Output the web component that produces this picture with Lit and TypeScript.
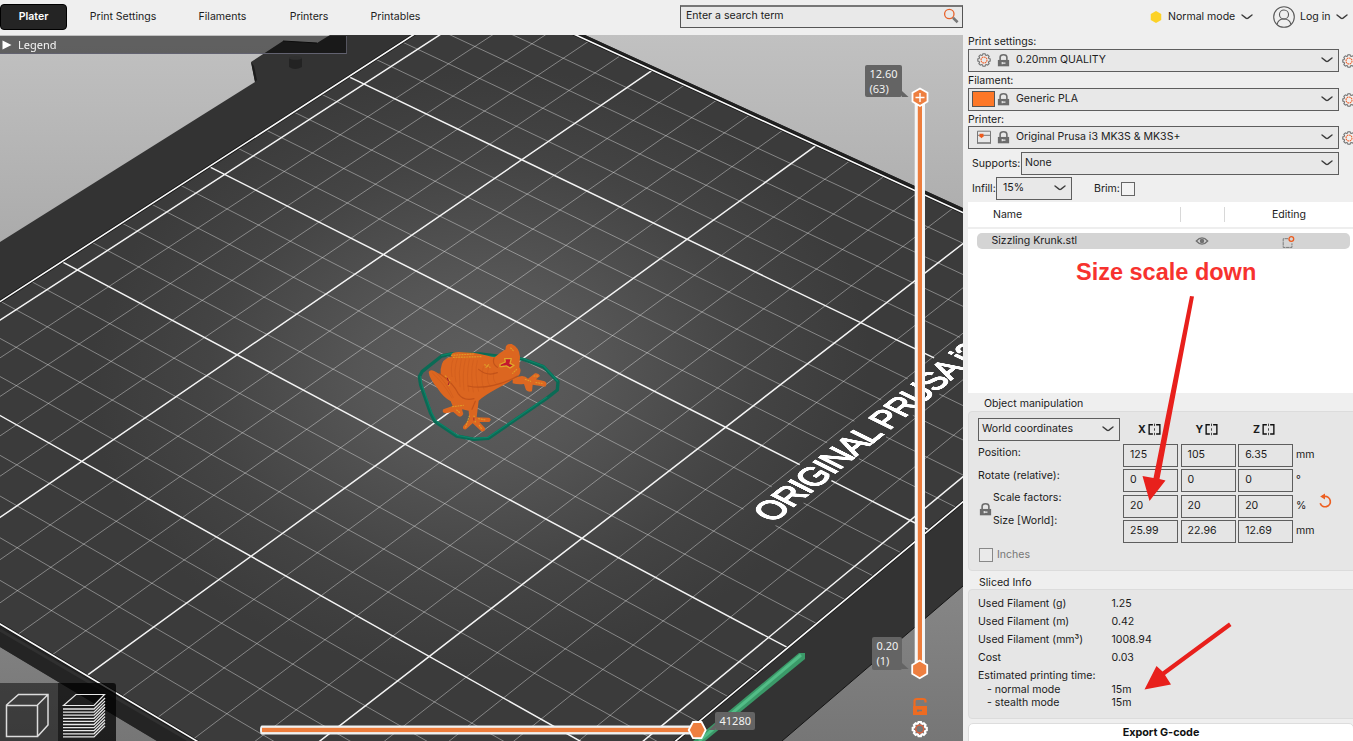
import { LitElement, html, svg, css } from "lit";
import { customElement, property } from "lit/decorators.js";

/* Perspective of the print bed: bed millimetres -> canvas pixels. */
const H = {
  a: 332.08, b: -498.55, c: 582,
  d: -195.59, e: -246.82, f: 538.3,
  g: 0.06202, h: 0.07954,
};

function project(x: number, y: number): [number, number] {
  const u = (x - 100) / 100;
  const v = (y - 55) / 150;
  const w = 1 + H.g * u + H.h * v;
  return [(H.a * u + H.b * v + H.c) / w, (H.d * u + H.e * v + H.f) / w];
}

const seg = (x1: number, y1: number, x2: number, y2: number) => {
  const [ax, ay] = project(x1, y1);
  const [bx, by] = project(x2, y2);
  return `M${ax.toFixed(1)} ${ay.toFixed(1)}L${bx.toFixed(1)} ${by.toFixed(1)}`;
};

/* matrix3d that lays an HTML box flat on the bed at (x0, y0). */
function bedMatrix(x0: number, y0: number, k: number, top: number): string {
  const u0 = (x0 - 100) / 100, us = k / 100;
  const v0 = (y0 - 55) / 150, vt = -k / 150;
  const w = [H.g * us, H.h * vt, 1 + H.g * u0 + H.h * v0];
  const px = [H.a * us, H.b * vt, H.a * u0 + H.b * v0 + H.c];
  const py = [H.d * us, H.e * vt, H.d * u0 + H.e * v0 + H.f].map((n, i) => n - top * w[i]);
  const n = (v: number) => (v / w[2]).toFixed(9);
  return `matrix3d(${n(px[0])},${n(py[0])},0,${n(w[0])},${n(px[1])},${n(py[1])},0,${n(w[1])},0,0,1,0,${n(px[2])},${n(py[2])},0,1)`;
}

function gridPaths() {
  let thin = "", bold = "";
  for (let x = 10; x < 250; x += 10) {
    const cut = x >= 130;
    const s = cut ? seg(x, 0, x, 26) + seg(x, 34.6, x, 210) : seg(x, 0, x, 210);
    if (x % 50 === 0) bold += s; else thin += s;
  }
  for (let y = 5; y < 210; y += 10) {
    const s = seg(0, y, 250, y);
    if ((y - 5) % 50 === 0) bold += s; else thin += s;
  }
  const edge = seg(0, 0, 250, 0) + seg(250, 0, 250, 210) + seg(250, 210, 0, 210) + seg(0, 210, 0, 0);
  return { thin, bold, edge };
}

const gearPath = (() => {
  const n = 8;
  let d = "";
  for (let i = 0; i < n; i++) {
    const t = (i / n) * Math.PI * 2;
    const p = (r: number, o: number) => `${(8 + r * Math.cos(t + o)).toFixed(2)} ${(8 + r * Math.sin(t + o)).toFixed(2)}`;
    d += `${i ? "L" : "M"}${p(5.1, -0.3)}L${p(6.3, -0.17)}L${p(6.3, 0.17)}L${p(5.1, 0.3)}`;
  }
  return d + "Z";
})();

const icons: Record<string, unknown> = {
  gear: svg`<path d=${gearPath} fill="none" stroke="#727272" stroke-width="1.1"/><circle cx="8" cy="8" r="3" fill="none" stroke="#f0602a" stroke-width="1.1" stroke-dasharray="1.7 .6"/>`,
  lock: svg`<path d="M4.4 8V4.6Q4.4 1.8 8 1.8T11.6 4.6V8" fill="none" stroke="#6c6c6c" stroke-width="1.7"/><path d="M2 7.4h12v6.8H2z" fill="#6c6c6c"/><path d="M6.3 10.8h3.8M6.6 9.6v2.4" stroke="#e8e8e8" stroke-width="1.1"/>`,
  printer: svg`<path d="M1.5 14.3V2.200h13v12.100" fill="none" stroke="#777" stroke-width="1"/><path d="M1.500 6.300h13" stroke="#777"/><path d="M1 14h14" stroke="#777" stroke-width="1.600"/><path d="M3.500 4.800h4v2.400l-2 2-2-2z" fill="#ed5a1c"/>`,
  chev: svg`<path d="M3 6L7 9.100Q8 9.800 9 9.100L13 6" fill="none" stroke="#3c3c3c" stroke-width="1.400" stroke-linecap="round"/>`,
  eye: svg`<path d="M1.5 8Q8 .8 14.500 8Q8 15.200 1.500 8Z" fill="none" stroke="#707070" stroke-width="1.500"/><circle cx="8" cy="8" r="2.600" fill="#707070"/>`,
  edit: svg`<path d="M8 4.200H2.500v10h10V9.500" fill="none" stroke="#777" stroke-width="1.100" stroke-dasharray="4 .7"/><circle cx="11.800" cy="4.600" r="2.700" fill="none" stroke="#ed5a1c" stroke-width="1.500"/>`,
  mirror: svg`<path d="M6 2.200H1.400V13.600H6M10 2.200h4.600V13.600H10" fill="none" stroke="#111" stroke-width="1.700"/><path d="M8 .8v3M8 6.500v3M8 12v3" stroke="#333" stroke-width="1.100"/>`,
  undo: svg`<path d="M3.200 10.200A5.200 5.200 0 1 0 7.500 3.400H5" fill="none" stroke="#ed5f21" stroke-width="1.700"/><path d="M8 .4L3.200 3.600L8 6.600Z" fill="#ed5f21"/>`,
  user: svg`<g fill="none" stroke="#585858" stroke-width=".8"><circle cx="8" cy="8" r="7.500"/><circle cx="8" cy="6.200" r="3.300"/><path d="M3 13.400Q3.800 9.400 8 9.500T13 13.400"/></g>`,
  search: svg`<circle cx="6.300" cy="6" r="4.700" fill="none" stroke="#e8622a" stroke-width="1.300"/><path d="M10 9.800L14.600 14.300" stroke="#777" stroke-width="2.600"/>`,
  hexagon: svg`<path d="M8 1.200L14 4.600V11.400L8 14.800L2 11.400V4.600Z" fill="#fcd227"/>`,
};

@customElement("ps-icon")
class PsIcon extends LitElement {
  @property() name = "gear";
  static styles = css`
    :host { display: block; width: 16px; height: 16px; flex: none; }
    svg { display: block; width: 100%; height: 100%; overflow: visible; }
  `;
  render() {
    return html`<svg viewBox="0 0 16 16">${icons[this.name]}</svg>`;
  }
}

@customElement("ps-combo")
class PsCombo extends LitElement {
  @property() value = "";
  static styles = css`
    :host {
      display: flex; align-items: center; box-sizing: border-box; height: 23px;
      border: 1px solid #5e5e5e; background: #e8e8e8; padding: 0 3px 1px; color: #1c1c1c;
    }
    .value { flex: 1; white-space: nowrap; }
    .chev { width: 16px; height: 16px; }
  `;
  render() {
    return html`<slot></slot><span class="value">${this.value}</span><ps-icon class="chev" name="chev"></ps-icon>`;
  }
}

@customElement("bed-view")
class BedView extends LitElement {
  static styles = css`
    :host { display: block; position: relative; width: 963px; height: 706px; overflow: hidden;
      background: linear-gradient(#c1c1c1, #767676); }
    svg { display: block; width: 963px; height: 706px; }
    .brand { position: absolute; left: 0; top: 0; transform-origin: 0 0; white-space: nowrap;
      font: 400 88px/88px "Liberation Sans", Arial, sans-serif; letter-spacing: -2.500px; color: #fff;
      -webkit-text-stroke: 4px #fff; }
    .over { position: absolute; left: 0; top: 0; }
    .legend { position: absolute; left: 0; top: 1px; width: 347px; height: 18px; box-sizing: border-box;
      background: rgba(0,0,0,.5); border-bottom: 1px solid #626270; border-right: 1px solid #55555f;
      display: flex; align-items: center; gap: 6px; color: #f4f4f4;
      font: 11px "Noto Sans", sans-serif; padding-left: 2px; }
    .legend svg { width: 10px; height: 10px; }
    .tip { position: absolute; box-sizing: border-box; background: #646464; border-radius: 2px; color: #f2f2f2;
      font: 11px/14.500px "Noto Sans", sans-serif; padding: 2px 4.500px; white-space: nowrap; }
    .tip-top { left: 865px; top: 30px; width: 37px; height: 32px; }
    .tip-bottom { left: 872px; top: 602px; width: 30px; height: 33px; }
    .tip-move { left: 715px; top: 677px; width: 40px; height: 18px; }
    .views { position: absolute; left: 0; top: 648px; width: 116px; height: 58px; display: flex;
      border-radius: 0 3px 0 0; overflow: hidden; }
    .view { flex: 1; background: rgba(0,0,0,.5); }
    .view.on { background: rgba(0,0,0,.74); }
    .view svg { width: 58px; height: 58px; }
  `;

  frog() {
    return svg`<g transform="translate(400 330) scale(.33333)" stroke-linejoin="round" stroke-linecap="round">
      <path d="M125 78L155 72L240 72L370 88L430 110L474 155L472 180L440 205L265 325L222 328L170 318L105 275L92 250L62 165L58 140L66 125Z" fill="none" stroke="#0a6b55" stroke-width="10"/>
      <path d="M125 76L155 70L370 86L431 108L473 153M62 140L66 165L96 250L109 273L172 316L222 325L264 322L440 202" fill="none" stroke="#0c8468" stroke-width="3.500"/>
      <path d="M122 118Q125 84 155 80Q150 66 176 66L220 68Q262 76 284 82Q300 68 317 58Q315 40 335 42Q358 52 360 80L358 112Q366 120 357 136Q322 160 290 176Q250 198 236 212L230 262L268 263Q276 268 268 276L238 276L255 294Q257 306 244 304L218 280L198 298Q186 300 190 288L208 268L206 242L186 238L190 252Q184 264 174 258L160 246L136 250Q124 248 130 238L158 228L152 214Q128 200 112 174Q88 146 86 126Q90 116 104 124L122 134Z" fill="#dc6620"/>
      <path d="M338 147Q370 130 384 146L405 130Q416 128 420 138L408 148L434 154Q444 160 436 170L398 164L396 184Q386 188 378 180L372 162Q352 164 338 160Z" fill="#dd6822"/>
      <path d="M118 130Q160 160 174 190Q190 214 222 206M226 214L216 238M352 138Q320 158 280 166Q240 176 204 168M236 118Q262 140 292 128M282 84Q276 102 292 112" fill="none" stroke="#b94c17" stroke-opacity=".75" stroke-width="3.500"/>
      <path d="M160 86Q150 110 156 140M172 86Q160 120 168 156M184 86Q174 126 180 170M196 88Q186 130 192 180M208 88Q198 134 206 184M220 90Q210 130 220 186M232 92Q222 130 236 184M250 110Q240 150 252 178M266 110Q256 150 270 168M282 126Q276 150 288 160M98 130Q130 158 156 204M108 128Q140 158 160 202" fill="none" stroke="#c05118" stroke-opacity=".65" stroke-width="1.500"/>
      <path d="M154 76L220 72M160 82L245 80M136 138L150 152L146 170M254 104L270 112M258 112L266 104M158 230L190 226M170 240L182 250M222 258L226 276M208 258L196 294M236 266L256 270M238 286L246 298M376 148L392 154M402 138L414 138M408 158L426 160M332 54L340 62M350 118L338 130" fill="none" stroke="#dfa229" stroke-opacity=".85" stroke-width="3.500" stroke-dasharray="3 5"/>
      <path d="M142 144l3 8M148 156l-3 8M222 264v6" stroke="#a31930" stroke-width="3"/>
      <path d="M300 103L316 96L314 86L334 86L330 100L342 106L330 114L320 108L300 110Z" fill="#c4182e" stroke="#e0a82a" stroke-width="4" stroke-dasharray="8 2"/>
    </g>`;
  }

  render() {
    const g = gridPaths();
    const corners = [[0, 0], [250, 0], [250, 210], [0, 210]].map(([x, y]) => project(x, y).join(",")).join(" ");
    const layers = Array.from({ length: 10 }, (_, i) => {
      const y = 26 + i * 3.1;
      return `M5 ${y}H36L47 ${y - 11}`;
    }).join("");
    return html`
      <svg viewBox="0 35 963 706">
        <defs>
          <radialGradient id="sheet" gradientUnits="userSpaceOnUse" cx="0" cy="0" r="1"
            gradientTransform="translate(480 370) rotate(-5) scale(390 300)">
            <stop offset="0" stop-color="#5e5e5e"/><stop offset=".3" stop-color="#565656"/>
            <stop offset=".7" stop-color="#444"/><stop offset="1" stop-color="#3b3b3b"/>
          </radialGradient>
        </defs>
        <path d="M0 242L255 82L251 62L283 41L317 43L330 35H585L963 208V586L782 741H157L0 647Z" fill="#333"/>
        <path d="M251 62L255 82L257 80L254 66Z" fill="#1d1d1d"/>
        <path d="M283 41L317 43" stroke="#181818"/>
        <path d="M289 58Q295 56 302 58V67Q295 71 289 67Z" fill="#232323"/>
        <ellipse cx="295.500" cy="58" rx="6.500" ry="1.800" fill="#303030"/>
        <path d="M0 625L200 741H157L0 647Z" fill="#242424"/>
        <path d="M0 630L190 741" stroke="#303030" stroke-width="3"/>
        <path d="M574 35H585L963 208V212Z" fill="#202020"/>
        <path d="M963 586L782 741" stroke="#151515"/>
        <polygon points=${corners} fill="url(#sheet)"/>
        <path d=${g.thin} stroke="#fff" stroke-opacity=".38" fill="none"/>
        <path d=${g.bold} stroke="#f4f4f4" stroke-width="1.500" fill="none"/>
        <path d=${g.edge} stroke="#111" stroke-width="3" fill="none"/>
        <path d=${g.edge} stroke="#fafafa" stroke-width="1.600" fill="none"/>
        <path d="M799 653L805 653L805 659L705 741H693Z" fill="#3b9a69"/>
        <path d="M801 655L699 741" stroke="#53bd87" stroke-width="3"/>
        ${this.frog()}
      </svg>
      <div class="brand" style="transform:${bedMatrix(130.3, 34.3, 0.1, 35)}">ORIGINAL PRUSA i3</div>
      <svg class="over" viewBox="0 35 963 706">
        <rect x="914.700" y="100" width="10.300" height="566" fill="#f6f6f6"/>
        <rect x="917.800" y="106" width="4.200" height="556" fill="#ed7d3c"/>
        <path d="M262 725.500H697V734.500H262Q260 734.500 260 730T262 725.500Z" fill="#f0f2f2"/>
        <rect x="262" y="727.800" width="430" height="4.300" fill="#ed7d3c"/>
        <g fill="#ee7f40" stroke="#fff" stroke-width="1.800">
          <path d="M920 88.500L927.500 92.800V101.600L920 106L912.500 101.600V92.800Z"/>
          <path d="M919.700 660.500L927.200 664.900V673.700L919.700 678.200L912.200 673.700V664.900Z"/>
          <path d="M688.700 730L693 722H701.500L705.700 730L701.500 738.200H693Z"/>
        </g>
        <path d="M920 93v9M915.500 97.500h9" stroke="#fff" stroke-width="1.400"/>
        <path d="M902 91V97H908.500Z" fill="#646464"/><path d="M902 663V669H908.500Z" fill="#646464"/>
        <path d="M715 724V730H709Z" fill="#646464"/>
        <path d="M914.500 706V701Q914.500 699 917 699H923Q925.500 699 925.500 701V702.500" fill="none" stroke="#ed6b21" stroke-width="2.200"/>
        <rect x="913" y="706" width="14" height="9" fill="#ed6b21"/>
        <path d="M917 710.500h5M918 709.500v2.500" stroke="#777" stroke-width="1.300"/>
        <g transform="translate(910.700 720) scale(1.130)">
          <path d=${gearPath} fill="none" stroke="#fff" stroke-width="1.900"/>
          <circle cx="8" cy="8" r="3.500" fill="none" stroke="#e2603a" stroke-width="1.200"/>
        </g>
      </svg>
      <div class="legend"><svg viewBox="0 0 10 10"><path d="M.5 .5L9.500 5L.5 9.500Z" fill="#fff"/></svg><span>Legend</span></div>
      <div class="tip tip-top">12.60<br>(63)</div>
      <div class="tip tip-bottom">0.20<br>(1)</div>
      <div class="tip tip-move">41280</div>
      <div class="views">
        <div class="view"><svg viewBox="0 0 58 58"><path d="M6.500 22.500H37.500V53.500H6.500ZM6.500 22L18.500 11.500H48V42L38 53M37.500 22L48 11.500" fill="none" stroke="#dcdcdc" stroke-width="1.500"/></svg></div>
        <div class="view on"><svg viewBox="0 0 58 58"><path d="M5.500 22.500L18 11.500H46.500L36 22.500Z" fill="none" stroke="#e8e8e8" stroke-width="1.200"/><path d=${layers} fill="none" stroke="#e8e8e8" stroke-width="1.300"/></svg></div>
      </div>
    `;
  }
}

@customElement("app-root")
class AppRoot extends LitElement {
  static styles = css`
    :host { display: block; position: relative; width: 1353px; height: 741px; overflow: hidden;
      background: #efefef; color: #1b1b1b; font: 10.550px/14px Inter, "Liberation Sans", sans-serif; }
    * { box-sizing: border-box; }
    .top { height: 35px; display: flex; align-items: center; padding-bottom: 1px; }
    .tab { height: 26px; line-height: 26px; text-align: center; white-space: nowrap; }
    .tab.on { width: 67px; background: #242424; border: 1px solid #000; line-height: 24px; border-radius: 4px; color: #fff; font-weight: 600; }
    .tabs { display: flex; width: 680px; }
    .t1 { width: 112px; } .t2 { width: 87px; } .t3 { width: 86px; } .t4 { width: 87px; }
    .search { width: 283px; height: 23px; border: 1px solid #555; border-top: 2px solid #777; background: #e9e9e9;
      display: flex; align-items: center; justify-content: space-between; padding: 0 3px 2px 5px; margin-top: -1px; }
    .mode { display: flex; align-items: center; margin-left: 185px; gap: 4px; white-space: nowrap; }
    .mode .txt { width: 67px; }
    .mode .hex { width: 16px; height: 14px; }
    .user { display: flex; align-items: center; margin-left: 18px; white-space: nowrap; }
    .user .face { width: 22px; height: 22px; margin-right: 5px; }
    .user .txt { width: 34px; }
    .main { display: flex; height: 706px; }
    .side { width: 390px; padding-left: 5px; display: flex; flex-direction: column; overflow: hidden; }
    .side > * { flex: none; }
    .label { height: 13px; line-height: 13px; margin-bottom: 1px; }
    .label.last { height: 12px; }
    .preset { display: flex; align-items: center; gap: 2px; width: 400px; margin-bottom: 2px; }
    .preset ps-combo { width: 371px; }
    .preset .pre { width: 23px; display: flex; justify-content: center; }
    .preset .lk { margin: 0 5px 0 1px; width: 15px; height: 15px; }
    .swatch { width: 23px; height: 16px; background: #fd7727; border: 1px solid #555; }
    .supports { display: flex; align-items: center; padding-left: 4px; margin-top: 1px; height: 23px; }
    .supports .k { width: 49px; }
    .supports ps-combo { width: 318px; }
    .infill { display: flex; align-items: center; padding-left: 4px; margin-top: 2px; height: 23px; }
    .infill .k { width: 24px; white-space: nowrap; }
    .infill ps-combo { width: 76px; padding-left: 6px; }
    .brim { margin-left: 22px; width: 27px; }
    .box { width: 14px; height: 14px; border: 1px solid #666; background: #f3f3f3; }
    .list { background: #fff; height: 191px; margin-top: 2px; }
    .head { display: flex; align-items: center; height: 27px; border-bottom: 2px solid #eee; width: 385px; }
    .head .n { width: 212px; padding-left: 25px; }
    .head .c { width: 45px; height: 15px; border-left: 1px solid #d8d8d8; border-right: 1px solid #d8d8d8; }
    .head .e { flex: 1; text-align: center; }
    .item { display: flex; align-items: center; margin: 4px 3px 0 9px; height: 16px; background: #d4d4d4; border-radius: 5px; }
    .item .n { width: 218px; padding-left: 14.500px; }
    .item .eye { width: 14px; height: 14px; }
    .item .edit { margin-left: 72px; width: 14px; height: 14px; margin-top: 1px; }
    .title { height: 18px; line-height: 18px; margin-top: 2px; padding-left: 16px; }
    .panel { background: #e6e6e6; border: 1px solid #dcdcdc; border-radius: 4px; width: 396px; }
    .manip { height: 160px; margin-top: -2px; padding: 6px 0 0 9px; display: grid;
      grid-template-columns: 145px 170px 24px 30px; align-content: start; }
    .manip ps-combo { width: 142px; }
    .axes { display: grid; grid-template-columns: repeat(3, 57.500px); align-items: center; height: 23px; font-weight: 700; }
    .axis { display: flex; align-items: center; padding-left: 15px; }
    .axis ps-icon { width: 15px; height: 13px; margin-left: 1px; }
    .lbls { grid-column: 1; display: grid; grid-auto-rows: 22.600px; align-content: start; align-items: center; padding-top: 1px; position: relative; }
    .ind { padding-left: 15px; }
    .plock { position: absolute; left: 0; top: 61px; width: 15px; height: 15px; }
    .fields { display: grid; grid-template-columns: 55px 55px 55px; column-gap: 2.600px; grid-auto-rows: 23px; row-gap: 2.400px; padding-top: 3px; }
    .fields span { border: 1px solid #5e5e5e; background: #e5e5e5; padding-left: 6px; line-height: 20px; }
    .units { display: grid; grid-auto-rows: 25.500px; align-items: center; padding-top: 1px; padding-left: 3px; }
    .undo { margin: 52px 0 0 0; width: 16px; height: 16px; }
    .inches { grid-column: 1 / -1; display: flex; gap: 4px; color: #777; margin-top: 4px; padding-left: 1px; }
    .inches .box { background: #eaeaea; border-color: #888; }
    .panel.info { height: 130px; padding: 5px 0 0 9px; margin-top: -3px; }
    .title.s { margin-top: 3px; padding-left: 11px; }
    .row { display: grid; grid-template-columns: 133.500px 1fr; height: 18px; line-height: 18px; }
    .row.tight { height: 13.500px; line-height: 13.500px; }
    .row.est { height: 15.500px; }
    .row .in { padding-left: 9px; }
    .export { margin-top: 4px; height: 24px; width: 386px; background: #fff; border: 1px solid #ddd; border-radius: 5px;
      font-weight: 700; font-size: 10.800px; text-align: center; line-height: 18px; color: #111; }
    .notes { position: absolute; left: 968px; top: 250px; }
    .notes text { font: 700 23.500px "Liberation Sans", Arial, sans-serif; fill: #f7322e; }
  `;

  preset(label: string, icon: unknown, value: string, last = false) {
    return html`
      <div class=${last ? "label last" : "label"}>${label}</div>
      <div class="preset">
        <ps-combo .value=${value}><span class="pre">${icon}</span><ps-icon class="lk" name="lock"></ps-icon></ps-combo>
        <ps-icon class="gear" name="gear"></ps-icon>
      </div>`;
  }

  render() {
    const fields = ["125", "105", "6.35", "0", "0", "0", "20", "20", "20", "25.99", "22.96", "12.69"];
    const used = [["Used Filament (g)", "1.25"], ["Used Filament (m)", "0.42"], ["Used Filament (mm³)", "1008.94"], ["Cost", "0.03"]];
    return html`
      <div class="top">
        <div class="tabs">
          <div class="tab on">Plater</div><div class="tab t1">Print Settings</div><div class="tab t2">Filaments</div>
          <div class="tab t3">Printers</div><div class="tab t4">Printables</div>
        </div>
        <div class="search"><span>Enter a search term</span><ps-icon name="search"></ps-icon></div>
        <div class="mode"><ps-icon class="hex" name="hexagon"></ps-icon><span class="txt">Normal mode</span><ps-icon name="chev"></ps-icon></div>
        <div class="user"><ps-icon class="face" name="user"></ps-icon><span class="txt">Log in</span><ps-icon name="chev"></ps-icon></div>
      </div>
      <div class="main">
        <bed-view></bed-view>
        <div class="side">
          ${this.preset("Print settings:", html`<ps-icon name="gear"></ps-icon>`, "0.20mm QUALITY")}
          ${this.preset("Filament:", html`<span class="swatch"></span>`, "Generic PLA")}
          ${this.preset("Printer:", html`<ps-icon name="printer"></ps-icon>`, "Original Prusa i3 MK3S & MK3S+", true)}
          <div class="supports"><span class="k">Supports:</span><ps-combo value="None"></ps-combo></div>
          <div class="infill"><span class="k">Infill:</span><ps-combo value="15%"></ps-combo><span class="brim">Brim:</span><span class="box"></span></div>
          <div class="list">
            <div class="head"><span class="n">Name</span><span class="c"></span><span class="e">Editing</span></div>
            <div class="item"><span class="n">Sizzling Krunk.stl</span><ps-icon class="eye" name="eye"></ps-icon><ps-icon class="edit" name="edit"></ps-icon></div>
          </div>
          <div class="title">Object manipulation</div>
          <div class="panel manip">
            <ps-combo value="World coordinates"></ps-combo>
            <div class="axes">${["X", "Y", "Z"].map((a) => html`<span class="axis">${a}<ps-icon name="mirror"></ps-icon></span>`)}</div>
            <div class="lbls">
              <span>Position:</span><span>Rotate (relative):</span><span class="ind">Scale factors:</span><span class="ind">Size [World]:</span>
              <ps-icon class="plock" name="lock"></ps-icon>
            </div>
            <div class="fields">${fields.map((f) => html`<span>${f}</span>`)}</div>
            <div class="units"><span>mm</span><span>°</span><span>%</span><span>mm</span></div>
            <ps-icon class="undo" name="undo"></ps-icon>
            <div class="inches"><span class="box"></span><span>Inches</span></div>
          </div>
          <div class="title s">Sliced Info</div>
          <div class="panel info">
            ${used.map(([k, v]) => html`<div class="row"><span>${k}</span><span>${v}</span></div>`)}
            <div class="row est"><span>Estimated printing time:</span></div>
            <div class="row tight"><span class="in">- normal mode</span><span>15m</span></div>
            <div class="row tight"><span class="in">- stealth mode</span><span>15m</span></div>
          </div>
          <div class="export">Export G-code</div>
        </div>
      </div>
      <svg class="notes" width="385" height="491" viewBox="968 250 385 491">
        <text x="1076" y="280">Size scale down</text>
        <g fill="#e8201c">
          <path d="M1190 296L1194 296.500L1159.500 479L1165.500 480.500L1149.500 501L1142.500 476L1153.500 478Z"/>
          <path d="M1229 622.500L1231.500 626L1165 675L1171 684.500L1144.500 689.500L1156.500 666L1162.500 671.500Z"/>
        </g>
      </svg>
    `;
  }
}
